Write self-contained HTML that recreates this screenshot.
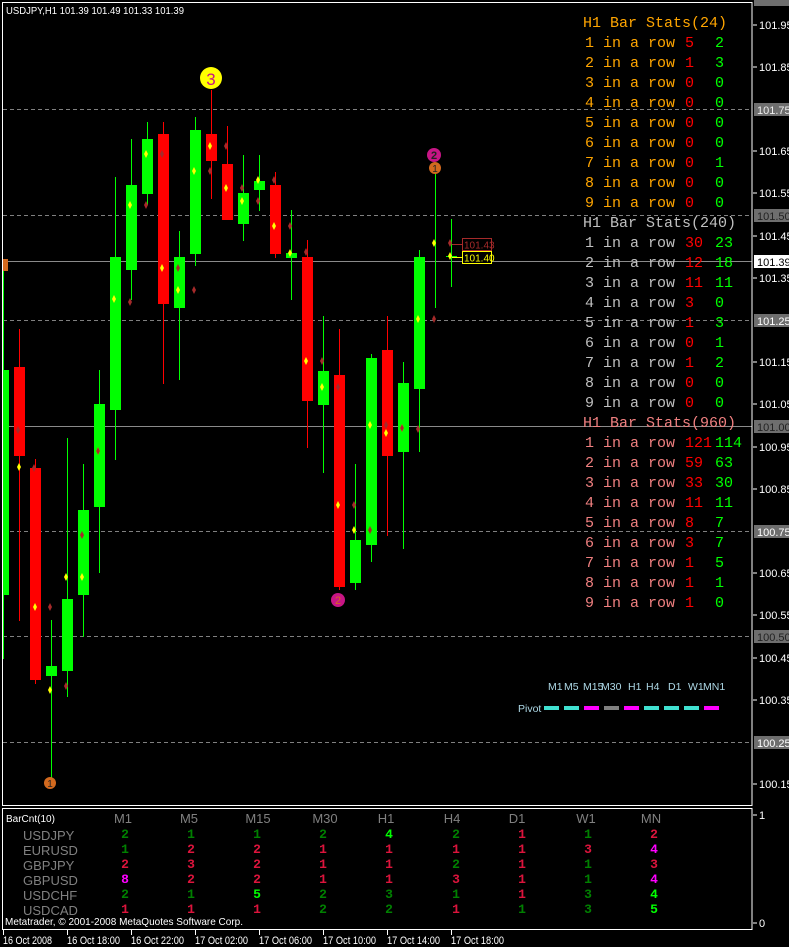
<!DOCTYPE html>
<html><head><meta charset="utf-8"><style>
html,body{margin:0;padding:0;background:#000;width:789px;height:947px;overflow:hidden}
svg{display:block}
.ax{font-family:"Liberation Sans",sans-serif;font-size:11px;fill:#fff}
.st{font-family:"Liberation Mono",monospace;font-size:15px}
.hd{font-family:"Liberation Sans",sans-serif;font-size:13px;fill:#808080}
.nm{font-family:"Liberation Mono",monospace;font-size:13px;font-weight:bold;text-anchor:middle}
</style></head><body>
<svg width="789" height="947" viewBox="0 0 789 947" xmlns="http://www.w3.org/2000/svg">
<rect width="789" height="947" fill="#000"/>
<g stroke="#808080" stroke-dasharray="4,3" stroke-width="1">
<line x1="3" y1="109.5" x2="752" y2="109.5"/>
<line x1="3" y1="215.5" x2="752" y2="215.5"/>
<line x1="3" y1="320.5" x2="752" y2="320.5"/>
<line x1="3" y1="531.5" x2="752" y2="531.5"/>
<line x1="3" y1="636.5" x2="752" y2="636.5"/>
<line x1="3" y1="742.5" x2="752" y2="742.5"/>
</g>
<g stroke="#8a8a8a" stroke-width="1">
<line x1="3" y1="261.5" x2="752" y2="261.5"/>
<line x1="3" y1="426.5" x2="752" y2="426.5"/>
</g>
<g>
<g stroke="#00ff00" stroke-width="1">
<line x1="3.5" y1="265" x2="3.5" y2="659"/>
<line x1="51.5" y1="620" x2="51.5" y2="778"/>
<line x1="67.5" y1="438" x2="67.5" y2="697"/>
<line x1="83.5" y1="464" x2="83.5" y2="637"/>
<line x1="99.5" y1="370" x2="99.5" y2="573"/>
<line x1="115.5" y1="177" x2="115.5" y2="460"/>
<line x1="131.5" y1="139" x2="131.5" y2="300"/>
<line x1="147.5" y1="122" x2="147.5" y2="205"/>
<line x1="179.5" y1="231" x2="179.5" y2="380"/>
<line x1="195.5" y1="117" x2="195.5" y2="266"/>
<line x1="243.5" y1="155" x2="243.5" y2="241"/>
<line x1="259.5" y1="155" x2="259.5" y2="211"/>
<line x1="291.5" y1="210" x2="291.5" y2="300"/>
<line x1="323.5" y1="316" x2="323.5" y2="473"/>
<line x1="355.5" y1="464" x2="355.5" y2="590"/>
<line x1="371.5" y1="354" x2="371.5" y2="562"/>
<line x1="403.5" y1="362" x2="403.5" y2="549"/>
<line x1="419.5" y1="250" x2="419.5" y2="452"/>
<line x1="435.5" y1="170" x2="435.5" y2="308"/>
<line x1="451.5" y1="219" x2="451.5" y2="287"/>
</g>
<g stroke="#ff0000" stroke-width="1">
<line x1="19.5" y1="329" x2="19.5" y2="621"/>
<line x1="35.5" y1="459" x2="35.5" y2="684"/>
<line x1="163.5" y1="122" x2="163.5" y2="384"/>
<line x1="211.5" y1="90" x2="211.5" y2="199"/>
<line x1="227.5" y1="126" x2="227.5" y2="200"/>
<line x1="275.5" y1="172" x2="275.5" y2="258"/>
<line x1="307.5" y1="240" x2="307.5" y2="448"/>
<line x1="339.5" y1="329" x2="339.5" y2="590"/>
<line x1="387.5" y1="316" x2="387.5" y2="536"/>
</g>
<g fill="#00ff00">
<rect x="3" y="370" width="6" height="225"/>
<rect x="46" y="666" width="11" height="10"/>
<rect x="62" y="599" width="11" height="72"/>
<rect x="78" y="510" width="11" height="85"/>
<rect x="94" y="404" width="11" height="103"/>
<rect x="110" y="257" width="11" height="153"/>
<rect x="126" y="185" width="11" height="85"/>
<rect x="142" y="139" width="11" height="55"/>
<rect x="174" y="257" width="11" height="51"/>
<rect x="190" y="130" width="11" height="124"/>
<rect x="238" y="193" width="11" height="31"/>
<rect x="254" y="181" width="11" height="9"/>
<rect x="286" y="253" width="11" height="5"/>
<rect x="318" y="371" width="11" height="34"/>
<rect x="350" y="540" width="11" height="43"/>
<rect x="366" y="358" width="11" height="187"/>
<rect x="398" y="383" width="11" height="69"/>
<rect x="414" y="257" width="11" height="132"/>
<rect x="446" y="256" width="11" height="1"/>
</g>
<g fill="#ff0000">
<rect x="14" y="367" width="11" height="89"/>
<rect x="30" y="468" width="11" height="212"/>
<rect x="158" y="134" width="11" height="170"/>
<rect x="206" y="134" width="11" height="27"/>
<rect x="222" y="164" width="11" height="56"/>
<rect x="270" y="185" width="11" height="69"/>
<rect x="302" y="257" width="11" height="144"/>
<rect x="334" y="375" width="11" height="212"/>
<rect x="382" y="350" width="11" height="106"/>
</g>
<g fill="#ffff00">
<path d="M19 463l2 4-2 4-2-4z"/><path d="M35 603l2 4-2 4-2-4z"/><path d="M50 686l2 4-2 4-2-4z"/>
<path d="M66 573l2 4-2 4-2-4z"/><path d="M82 573l2 4-2 4-2-4z"/><path d="M98 447l2 4-2 4-2-4z"/>
<path d="M114 295l2 4-2 4-2-4z"/><path d="M130 201l2 4-2 4-2-4z"/><path d="M146 150l2 4-2 4-2-4z"/>
<path d="M162 264l2 4-2 4-2-4z"/><path d="M178 286l2 4-2 4-2-4z"/><path d="M194 167l2 4-2 4-2-4z"/>
<path d="M210 142l2 4-2 4-2-4z"/><path d="M226 184l2 4-2 4-2-4z"/><path d="M242 197l2 4-2 4-2-4z"/>
<path d="M258 176l2 4-2 4-2-4z"/><path d="M274 222l2 4-2 4-2-4z"/><path d="M290 249l2 4-2 4-2-4z"/>
<path d="M306 357l2 4-2 4-2-4z"/><path d="M322 383l2 4-2 4-2-4z"/><path d="M338 501l2 4-2 4-2-4z"/>
<path d="M354 526l2 4-2 4-2-4z"/><path d="M370 421l2 4-2 4-2-4z"/><path d="M386 429l2 4-2 4-2-4z"/>
<path d="M402 424l2 4-2 4-2-4z"/><path d="M418 315l2 4-2 4-2-4z"/><path d="M434 239l2 4-2 4-2-4z"/>
<path d="M450 252l2 4-2 4-2-4z"/>
</g>
<g fill="#a52a2a">
<path d="M18 426l2 4-2 4-2-4z"/><path d="M34 464l2 4-2 4-2-4z"/><path d="M50 603l2 4-2 4-2-4z"/>
<path d="M66 682l2 4-2 4-2-4z"/><path d="M82 531l2 4-2 4-2-4z"/><path d="M98 447l2 4-2 4-2-4z"/>
<path d="M130 298l2 4-2 4-2-4z"/><path d="M146 201l2 4-2 4-2-4z"/><path d="M162 150l2 4-2 4-2-4z"/>
<path d="M178 264l2 4-2 4-2-4z"/><path d="M194 286l2 4-2 4-2-4z"/><path d="M210 167l2 4-2 4-2-4z"/>
<path d="M226 142l2 4-2 4-2-4z"/><path d="M242 184l2 4-2 4-2-4z"/><path d="M258 197l2 4-2 4-2-4z"/>
<path d="M274 176l2 4-2 4-2-4z"/><path d="M290 222l2 4-2 4-2-4z"/><path d="M306 248l2 4-2 4-2-4z"/>
<path d="M322 357l2 4-2 4-2-4z"/><path d="M338 383l2 4-2 4-2-4z"/><path d="M354 501l2 4-2 4-2-4z"/>
<path d="M370 526l2 4-2 4-2-4z"/><path d="M386 421l2 4-2 4-2-4z"/><path d="M402 424l2 4-2 4-2-4z"/>
<path d="M418 425l2 4-2 4-2-4z"/><path d="M434 315l2 4-2 4-2-4z"/><path d="M450 239l2 4-2 4-2-4z"/>
</g>
</g>
<circle cx="211" cy="78" r="11" fill="#ffff00"/>
<text x="211" y="85" font-family="Liberation Sans,sans-serif" font-size="17" fill="#c71585" text-anchor="middle">3</text>
<circle cx="434" cy="155" r="7" fill="#c71585"/>
<text x="434" y="159" font-family="Liberation Sans,sans-serif" font-size="11" font-weight="bold" fill="#222" text-anchor="middle">2</text>
<circle cx="435" cy="168" r="6" fill="#d2691e"/>
<text x="435" y="172" font-family="Liberation Sans,sans-serif" font-size="10" fill="#222" text-anchor="middle">1</text>
<circle cx="50" cy="783" r="6" fill="#d2691e"/>
<text x="50" y="787" font-family="Liberation Sans,sans-serif" font-size="10" fill="#222" text-anchor="middle">1</text>
<circle cx="338" cy="600" r="7" fill="#c71585"/>
<text x="338" y="604" font-family="Liberation Sans,sans-serif" font-size="11" fill="#d2691e" text-anchor="middle">2</text>
<rect x="3" y="259" width="5" height="12" fill="#d2691e"/>
<line x1="452" y1="244.5" x2="462" y2="244.5" stroke="#a52a2a"/>
<rect x="462.5" y="238.5" width="29" height="12" fill="#000" stroke="#a52a2a"/>
<text x="464" y="248.5" font-family="Liberation Sans,sans-serif" font-size="10" fill="#a52a2a">101.43</text>
<line x1="452" y1="257.5" x2="462" y2="257.5" stroke="#ffff00"/>
<rect x="462.5" y="251.5" width="29" height="12" fill="#000" stroke="#ffff00"/>
<text x="464" y="261.5" font-family="Liberation Sans,sans-serif" font-size="10" fill="#ffff00">101.40</text>
<g class="st">
<g fill="#ffa500">
<text x="583" y="27">H1 Bar Stats(24)</text>
<text x="585" y="47">1 in a row</text><text x="585" y="67">2 in a row</text><text x="585" y="87">3 in a row</text>
<text x="585" y="107">4 in a row</text><text x="585" y="127">5 in a row</text><text x="585" y="147">6 in a row</text>
<text x="585" y="167">7 in a row</text><text x="585" y="187">8 in a row</text><text x="585" y="207">9 in a row</text>
</g>
<g fill="#c0c0c0">
<text x="583" y="227">H1 Bar Stats(240)</text>
<text x="585" y="247">1 in a row</text><text x="585" y="267">2 in a row</text><text x="585" y="287">3 in a row</text>
<text x="585" y="307">4 in a row</text><text x="585" y="327">5 in a row</text><text x="585" y="347">6 in a row</text>
<text x="585" y="367">7 in a row</text><text x="585" y="387">8 in a row</text><text x="585" y="407">9 in a row</text>
</g>
<g fill="#f08080">
<text x="583" y="427">H1 Bar Stats(960)</text>
<text x="585" y="447">1 in a row</text><text x="585" y="467">2 in a row</text><text x="585" y="487">3 in a row</text>
<text x="585" y="507">4 in a row</text><text x="585" y="527">5 in a row</text><text x="585" y="547">6 in a row</text>
<text x="585" y="567">7 in a row</text><text x="585" y="587">8 in a row</text><text x="585" y="607">9 in a row</text>
</g>
<g fill="#ff0000">
<text x="685" y="47">5</text><text x="685" y="67">1</text><text x="685" y="87">0</text><text x="685" y="107">0</text><text x="685" y="127">0</text><text x="685" y="147">0</text><text x="685" y="167">0</text><text x="685" y="187">0</text><text x="685" y="207">0</text>
<text x="685" y="247">30</text><text x="685" y="267">12</text><text x="685" y="287">11</text><text x="685" y="307">3</text><text x="685" y="327">1</text><text x="685" y="347">0</text><text x="685" y="367">1</text><text x="685" y="387">0</text><text x="685" y="407">0</text>
<text x="685" y="447">121</text><text x="685" y="467">59</text><text x="685" y="487">33</text><text x="685" y="507">11</text><text x="685" y="527">8</text><text x="685" y="547">3</text><text x="685" y="567">1</text><text x="685" y="587">1</text><text x="685" y="607">1</text>
</g>
<g fill="#00ff00">
<text x="715" y="47">2</text><text x="715" y="67">3</text><text x="715" y="87">0</text><text x="715" y="107">0</text><text x="715" y="127">0</text><text x="715" y="147">0</text><text x="715" y="167">1</text><text x="715" y="187">0</text><text x="715" y="207">0</text>
<text x="715" y="247">23</text><text x="715" y="267">18</text><text x="715" y="287">11</text><text x="715" y="307">0</text><text x="715" y="327">3</text><text x="715" y="347">1</text><text x="715" y="367">2</text><text x="715" y="387">0</text><text x="715" y="407">0</text>
<text x="715" y="447">114</text><text x="715" y="467">63</text><text x="715" y="487">30</text><text x="715" y="507">11</text><text x="715" y="527">7</text><text x="715" y="547">7</text><text x="715" y="567">5</text><text x="715" y="587">1</text><text x="715" y="607">0</text>
</g>
</g>
<g font-family="Liberation Sans,sans-serif" font-size="10.5" fill="#add8e6">
<text x="548" y="690">M1</text><text x="564" y="690">M5</text><text x="583" y="690">M15</text><text x="601" y="690">M30</text>
<text x="628" y="690">H1</text><text x="646" y="690">H4</text><text x="668" y="690">D1</text><text x="688" y="690">W1</text><text x="703" y="690">MN1</text>
<text x="518" y="712">Pivot</text>
</g>
<g>
<rect x="544" y="706" width="15" height="4" fill="#40e0d0"/>
<rect x="564" y="706" width="15" height="4" fill="#40e0d0"/>
<rect x="584" y="706" width="15" height="4" fill="#ff00ff"/>
<rect x="604" y="706" width="15" height="4" fill="#808080"/>
<rect x="624" y="706" width="15" height="4" fill="#ff00ff"/>
<rect x="644" y="706" width="15" height="4" fill="#40e0d0"/>
<rect x="664" y="706" width="15" height="4" fill="#40e0d0"/>
<rect x="684" y="706" width="15" height="4" fill="#40e0d0"/>
<rect x="704" y="706" width="15" height="4" fill="#ff00ff"/>
</g>
<text x="6" y="14" font-family="Liberation Sans,sans-serif" font-size="10.5" fill="#fff" textLength="178" lengthAdjust="spacingAndGlyphs">USDJPY,H1  101.39 101.49 101.33 101.39</text>
<g stroke="#fff" fill="none" stroke-width="1">
<rect x="2.5" y="2.5" width="749.5" height="803"/>
<rect x="2.5" y="808.5" width="749.5" height="121"/>
</g>
<g stroke="#fff">
<line x1="753" y1="25" x2="757" y2="25"/><line x1="753" y1="67" x2="757" y2="67"/><line x1="753" y1="151" x2="757" y2="151"/>
<line x1="753" y1="193" x2="757" y2="193"/><line x1="753" y1="236" x2="757" y2="236"/><line x1="753" y1="278" x2="757" y2="278"/>
<line x1="753" y1="362" x2="757" y2="362"/><line x1="753" y1="404" x2="757" y2="404"/><line x1="753" y1="447" x2="757" y2="447"/>
<line x1="753" y1="489" x2="757" y2="489"/><line x1="753" y1="573" x2="757" y2="573"/><line x1="753" y1="615" x2="757" y2="615"/>
<line x1="753" y1="658" x2="757" y2="658"/><line x1="753" y1="700" x2="757" y2="700"/><line x1="753" y1="784" x2="757" y2="784"/>
<line x1="753" y1="815" x2="757" y2="815"/><line x1="753" y1="923" x2="757" y2="923"/>
</g>
<g fill="#6e6e6e">
<rect x="754" y="0" width="35" height="6"/>
<rect x="754" y="103" width="35" height="13"/><rect x="754" y="209" width="35" height="13"/>
<rect x="754" y="314" width="35" height="13"/><rect x="754" y="420" width="35" height="13"/>
<rect x="754" y="525" width="35" height="13"/><rect x="754" y="630" width="35" height="13"/>
<rect x="754" y="736" width="35" height="13"/>
</g>
<rect x="754" y="255" width="35" height="13" fill="#fff"/>
<g class="ax">
<text x="759" y="29">101.95</text><text x="759" y="71">101.85</text><text x="757" y="114" fill="#eee">101.75</text>
<text x="759" y="155">101.65</text><text x="759" y="197">101.55</text><text x="757" y="220" style="fill:#222">101.50</text>
<text x="759" y="240">101.45</text><text x="757" y="266" style="fill:#000">101.39</text><text x="759" y="282">101.35</text>
<text x="757" y="325">101.25</text><text x="759" y="366">101.15</text><text x="759" y="408">101.05</text>
<text x="757" y="431" style="fill:#222">101.00</text><text x="759" y="451">100.95</text><text x="759" y="493">100.85</text>
<text x="757" y="536">100.75</text><text x="759" y="577">100.65</text><text x="759" y="619">100.55</text>
<text x="757" y="641" style="fill:#222">100.50</text><text x="759" y="662">100.45</text><text x="759" y="704">100.35</text>
<text x="757" y="747">100.25</text><text x="759" y="788">100.15</text>
<text x="759" y="819">1</text><text x="759" y="927">0</text>
</g>
<text x="6" y="822" font-family="Liberation Sans,sans-serif" font-size="10" fill="#fff">BarCnt(10)</text>
<g class="hd" text-anchor="middle">
<text x="123" y="823">M1</text><text x="189" y="823">M5</text><text x="258" y="823">M15</text><text x="325" y="823">M30</text>
<text x="386" y="823">H1</text><text x="452" y="823">H4</text><text x="517" y="823">D1</text><text x="586" y="823">W1</text><text x="651" y="823">MN</text>
</g>
<g class="hd" text-anchor="start">
<text x="23" y="840">USDJPY</text><text x="23" y="855">EURUSD</text><text x="23" y="870">GBPJPY</text>
<text x="23" y="885">GBPUSD</text><text x="23" y="900">USDCHF</text><text x="23" y="915">USDCAD</text>
</g>
<g class="nm">
<g fill="#008000"><text x="125" y="838">2</text><text x="191" y="838">1</text><text x="257" y="838">1</text><text x="323" y="838">2</text><text x="456" y="838">2</text><text x="588" y="838">1</text>
<text x="125" y="853">1</text><text x="456" y="868">2</text><text x="588" y="868">1</text><text x="588" y="883">1</text>
<text x="125" y="898">2</text><text x="191" y="898">1</text><text x="323" y="898">2</text><text x="389" y="898">3</text><text x="456" y="898">1</text><text x="588" y="898">3</text>
<text x="323" y="913">2</text><text x="389" y="913">2</text><text x="522" y="913">1</text><text x="588" y="913">3</text></g>
<g fill="#00ff00"><text x="389" y="838">4</text><text x="257" y="898">5</text><text x="654" y="898">4</text><text x="654" y="913">5</text></g>
<g fill="#ff00ff"><text x="654" y="853">4</text><text x="125" y="883">8</text><text x="654" y="883">4</text></g>
<g fill="#dc143c">
<text x="522" y="838">1</text><text x="654" y="838">2</text>
<text x="191" y="853">2</text><text x="257" y="853">2</text><text x="323" y="853">1</text><text x="389" y="853">1</text><text x="456" y="853">1</text><text x="522" y="853">1</text><text x="588" y="853">3</text>
<text x="125" y="868">2</text><text x="191" y="868">3</text><text x="257" y="868">2</text><text x="323" y="868">1</text><text x="389" y="868">1</text><text x="522" y="868">1</text><text x="654" y="868">3</text>
<text x="191" y="883">2</text><text x="257" y="883">2</text><text x="323" y="883">1</text><text x="389" y="883">1</text><text x="456" y="883">3</text><text x="522" y="883">1</text>
<text x="522" y="898">1</text>
<text x="125" y="913">1</text><text x="191" y="913">1</text><text x="257" y="913">1</text><text x="456" y="913">1</text>
</g>
</g>
<text x="5" y="925" font-family="Liberation Sans,sans-serif" font-size="10.5" fill="#fff" textLength="238" lengthAdjust="spacingAndGlyphs">Metatrader, © 2001-2008 MetaQuotes Software Corp.</text>
<g stroke="#fff">
<line x1="3.5" y1="930" x2="3.5" y2="935"/><line x1="67.5" y1="930" x2="67.5" y2="935"/><line x1="131.5" y1="930" x2="131.5" y2="935"/>
<line x1="195.5" y1="930" x2="195.5" y2="935"/><line x1="259.5" y1="930" x2="259.5" y2="935"/><line x1="323.5" y1="930" x2="323.5" y2="935"/>
<line x1="387.5" y1="930" x2="387.5" y2="935"/><line x1="451.5" y1="930" x2="451.5" y2="935"/>
</g>
<g class="ax" font-size="10">
<text x="3" y="944" textLength="49" lengthAdjust="spacingAndGlyphs">16 Oct 2008</text>
<text x="67" y="944" textLength="53" lengthAdjust="spacingAndGlyphs">16 Oct 18:00</text>
<text x="131" y="944" textLength="53" lengthAdjust="spacingAndGlyphs">16 Oct 22:00</text>
<text x="195" y="944" textLength="53" lengthAdjust="spacingAndGlyphs">17 Oct 02:00</text>
<text x="259" y="944" textLength="53" lengthAdjust="spacingAndGlyphs">17 Oct 06:00</text>
<text x="323" y="944" textLength="53" lengthAdjust="spacingAndGlyphs">17 Oct 10:00</text>
<text x="387" y="944" textLength="53" lengthAdjust="spacingAndGlyphs">17 Oct 14:00</text>
<text x="451" y="944" textLength="53" lengthAdjust="spacingAndGlyphs">17 Oct 18:00</text>
</g>
</svg>
</body></html>
